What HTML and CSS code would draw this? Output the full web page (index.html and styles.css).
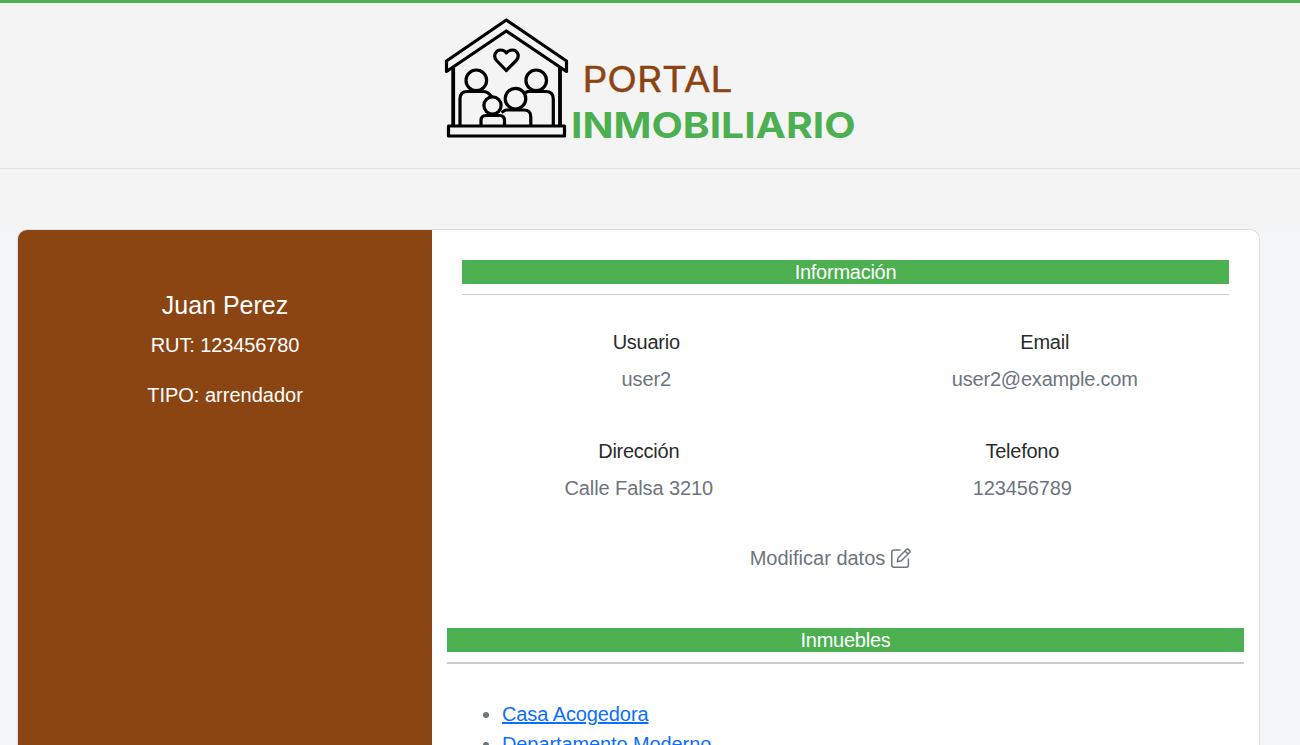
FILE: index.html
```html
<!DOCTYPE html>
<html lang="es">
<head>
<meta charset="utf-8">
<title>Portal Inmobiliario</title>
<link rel="stylesheet" href="styles.css">
</head>
<body>
<header class="header">
  <svg class="logo" width="420" height="130" viewBox="440 17 420 130">
    <g class="house">
      <path d="M506.300 20 566.500 61V71.500L506.300 31 446.500 71.500V61Z"/>
      <path d="M453.200 68V126M560 68V126" stroke-width="3.800"/>
      <rect x="448.500" y="126" width="116" height="10"/>
      <path d="M506.300 70.500 496.500 60.500C492.500 55.500 496 50 500.500 50Q504.500 50 506.300 53Q508.500 50 512.500 50C517 50 520.500 55.500 516.300 60.500Z"/>
      <circle cx="476.300" cy="80.300" r="10.300"/>
      <circle cx="536.200" cy="80.300" r="10.300"/>
      <circle cx="515.500" cy="98.700" r="10.300"/>
      <circle cx="492.500" cy="105.500" r="8.600"/>
      <path d="M460 125V99Q460 91.500 467.500 91.500H483Q488 91.500 491.500 96.500"/>
      <path d="M525.500 92.500 528 91.500H545.500Q553.300 91.500 553.300 99V125"/>
      <path d="M481 125V120.500Q481 115.500 486 115.500H499.500Q504.500 115.500 504.500 120.500V125"/>
      <path d="M501.500 112.500 505.500 110H524Q530.800 110 530.800 117V125"/>
    </g>
    <text class="brand-top" x="582.500" y="91.800" textLength="150" lengthAdjust="spacingAndGlyphs">PORTAL</text>
    <text class="brand-bottom" x="571" y="137.500" textLength="284.500" lengthAdjust="spacingAndGlyphs">INMOBILIARIO</text>
  </svg>
</header>
<main class="page">
  <div class="card">
    <aside class="profile">
      <h1 class="name">Juan Perez</h1>
      <p class="rut">RUT: 123456780</p>
      <p class="type">TIPO: arrendador</p>
    </aside>
    <section class="content">
      <div class="info">
        <h2 class="bar">Información</h2>
        <div class="fields fields-wide">
          <div><h3>Usuario</h3><p>user2</p></div>
          <div><h3>Email</h3><p class="email">user2@example.com</p></div>
        </div>
        <div class="fields">
          <div><h3>Dirección</h3><p>Calle Falsa 3210</p></div>
          <div><h3>Telefono</h3><p>123456789</p></div>
        </div>
        <div class="edit">
          <span>Modificar datos</span>
          <svg class="edit-icon" width="20" height="20" viewBox="0 0 20 20"><path d="M9 2H3Q.8 2 .8 4.200V17Q.8 19.200 3 19.200H15.200Q17.400 19.200 17.400 17V11"/><path d="M6.300 13.700 7.200 9.700 15.700 1.200Q16.400.5 17.100 1.200L18.800 2.900Q19.500 3.600 18.800 4.300L10.300 12.800ZM14 3 17 6"/></svg>
        </div>
      </div>
      <h2 class="bar">Inmuebles</h2>
      <ul class="list">
        <li><a href="#">Casa Acogedora</a></li>
        <li><a href="#">Departamento Moderno</a></li>
      </ul>
    </section>
  </div>
</main>
</body>
</html>
```
FILE: styles.css
```css
* { box-sizing: border-box; }
body {
  margin: 0;
  height: 745px;
  overflow: hidden;
  background: #f4f4f4;
  color: #6c757d;
  font: 20px/30px "Liberation Sans", Arial, sans-serif;
}
h1, h2, h3, p { margin: 0; font-weight: 400; }
.header {
  height: 169px;
  padding-top: 14px;
  border-top: 3px solid #4caf50;
  border-bottom: 1px solid #dee2e6;
}
.logo { display: block; margin: 0 auto; }
.house { fill: none; stroke: #000; stroke-width: 3.2; stroke-linejoin: round; }
.brand-top { font: 400 35px Inter, sans-serif; fill: #8b4513; stroke: #8b4513; stroke-width: .4px; }
.brand-bottom { font: 700 36px Inter, sans-serif; fill: #4caf50; }
.page { margin-top: 60px; padding: 0 40px 0 17px; background: linear-gradient(#f4f4f4 1px, #f4f5f7 1px); }
.card {
  display: flex;
  height: 516px;
  border: 1px solid #dcdddf;
  border-bottom: 0;
  border-radius: 10px 10px 0 0;
  overflow: hidden;
  background: #fff;
}
.profile { width: 414px; padding-top: 60px; background: #8b4513; color: #fff; text-align: center; }
.name { font-size: 25px; line-height: 30px; }
.rut { margin-top: 10px; letter-spacing: -.12px; }
.type { margin-top: 20px; }
.content { flex: 1; padding: 30px 15px 0; }
.info { height: 368px; padding: 0 15px; }
.bar {
  position: relative;
  height: 24px;
  background: #4caf50;
  color: #fff;
  font-size: 20px;
  line-height: 24px;
  letter-spacing: -.25px;
  text-align: center;
}
.bar::after {
  content: "";
  position: absolute;
  inset: 34px 0 auto;
  height: 2px;
  background: #ccc;
}
.info .bar::after { height: 1px; }
.fields { display: grid; grid-template-columns: 1fr 1fr; margin: 48px 15px 0 -15px; text-align: center; }
.fields-wide { margin: 46px -15px 0; }
.fields h3 { color: #2b2b2b; font-size: 20px; line-height: 24px; letter-spacing: -.25px; margin-bottom: 10px; }
.fields p { line-height: 30px; letter-spacing: -.1px; }
.fields .email { letter-spacing: -.2px; }
.fields + .fields { margin-top: 45px; }
.edit { display: flex; justify-content: center; align-items: center; gap: 6px; margin: 40px 15px 0 -15px; }
.edit-icon { fill: none; stroke: currentColor; stroke-width: 1.5; stroke-linejoin: round; stroke-linecap: round; }
.list { margin: 47px 0 0; padding-left: 55px; letter-spacing: -.1px; }
.list a { color: #0d6efd; }
```
